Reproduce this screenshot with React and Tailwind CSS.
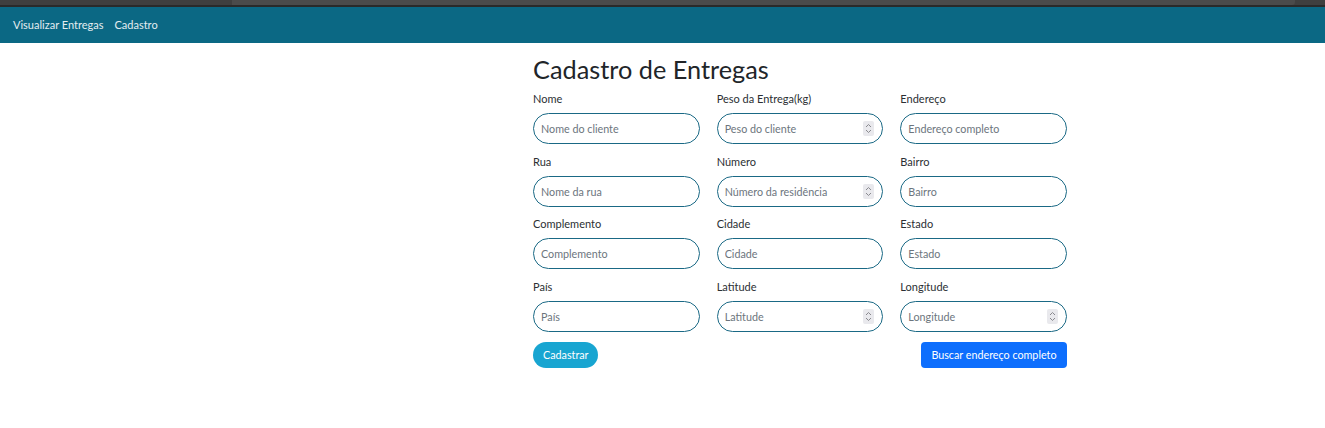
import React from "react";

const fields = [
    { label: "Nome", placeholder: "Nome do cliente" },
    { label: "Peso da Entrega(kg)", placeholder: "Peso do cliente", number: true },
    { label: "Endereço", placeholder: "Endereço completo" },
    { label: "Rua", placeholder: "Nome da rua" },
    { label: "Número", placeholder: "Número da residência", number: true },
    { label: "Bairro", placeholder: "Bairro" },
    { label: "Complemento", placeholder: "Complemento" },
    { label: "Cidade", placeholder: "Cidade" },
    { label: "Estado", placeholder: "Estado" },
    { label: "País", placeholder: "País" },
    { label: "Latitude", placeholder: "Latitude", number: true },
    { label: "Longitude", placeholder: "Longitude", number: true },
];

const Spinner = () => (
    <span className="absolute right-[9px] top-[8px] flex h-[15px] w-[11px] items-center justify-center rounded-[2px] bg-[#e9e9ed]">
        <svg width="7" height="11" viewBox="0 0 7 11" fill="none" stroke="#8a8a8f" strokeWidth="1">
            <path d="M1 4 L3.5 1.5 L6 4" />
            <path d="M1 7 L3.5 9.5 L6 7" />
        </svg>
    </span>
);

const Field = ({ label, placeholder, number }) => (
    <div className="flex flex-col">
        <label className="mb-[6px] h-[17px] text-[11px] leading-[17px] text-[#2b2f33]">{label}</label>
        <div className="relative">
            <input
                type="text"
                placeholder={placeholder}
                className="h-[31px] w-full rounded-[16px] border border-[#1a6985] bg-white px-[7px] text-[10.75px] text-[#212529] outline-none placeholder:text-[#6c757d]"
            />
            {number && <Spinner />}
        </div>
    </div>
);

export default function App() {
    return (
        <div className="min-h-screen bg-white font-['Lato',sans-serif]">
            <div className="h-[7px] bg-[#2a2a2a]">
                <div className="flex h-[5px] bg-[#3f3f3f]">
                    <div className="ml-[232px] h-full w-[1063px] rounded-br-[3px] bg-[#4b4b4b]" />
                </div>
            </div>

            <nav className="flex h-[36px] items-center gap-[11px] bg-[#0b6884] px-[13px] text-[11px] text-[#e3edf1]">
                <a href="#">Visualizar Entregas</a>
                <a href="#">Cadastro</a>
            </nav>

            <main className="ml-[533px] w-[534px] pt-[12px]">
                <h1 className="mb-[6px] h-[29px] text-[25.3px] leading-[29px] text-[#212529]">Cadastro de Entregas</h1>

                <div className="grid grid-cols-3 gap-x-[17px] gap-y-[8.7px]">
                    {fields.map((f) => (
                        <Field key={f.label} {...f} />
                    ))}
                </div>

                <div className="mt-[10px] flex items-center justify-between">
                    <button className="h-[26px] rounded-full bg-[#18a5d1] px-[10px] text-[10.75px] text-white">
                        Cadastrar
                    </button>
                    <button className="h-[26px] rounded-[4px] bg-[#0d6efd] px-[10.5px] text-[10.75px] text-white">
                        Buscar endereço completo
                    </button>
                </div>
            </main>
        </div>
    );
}
